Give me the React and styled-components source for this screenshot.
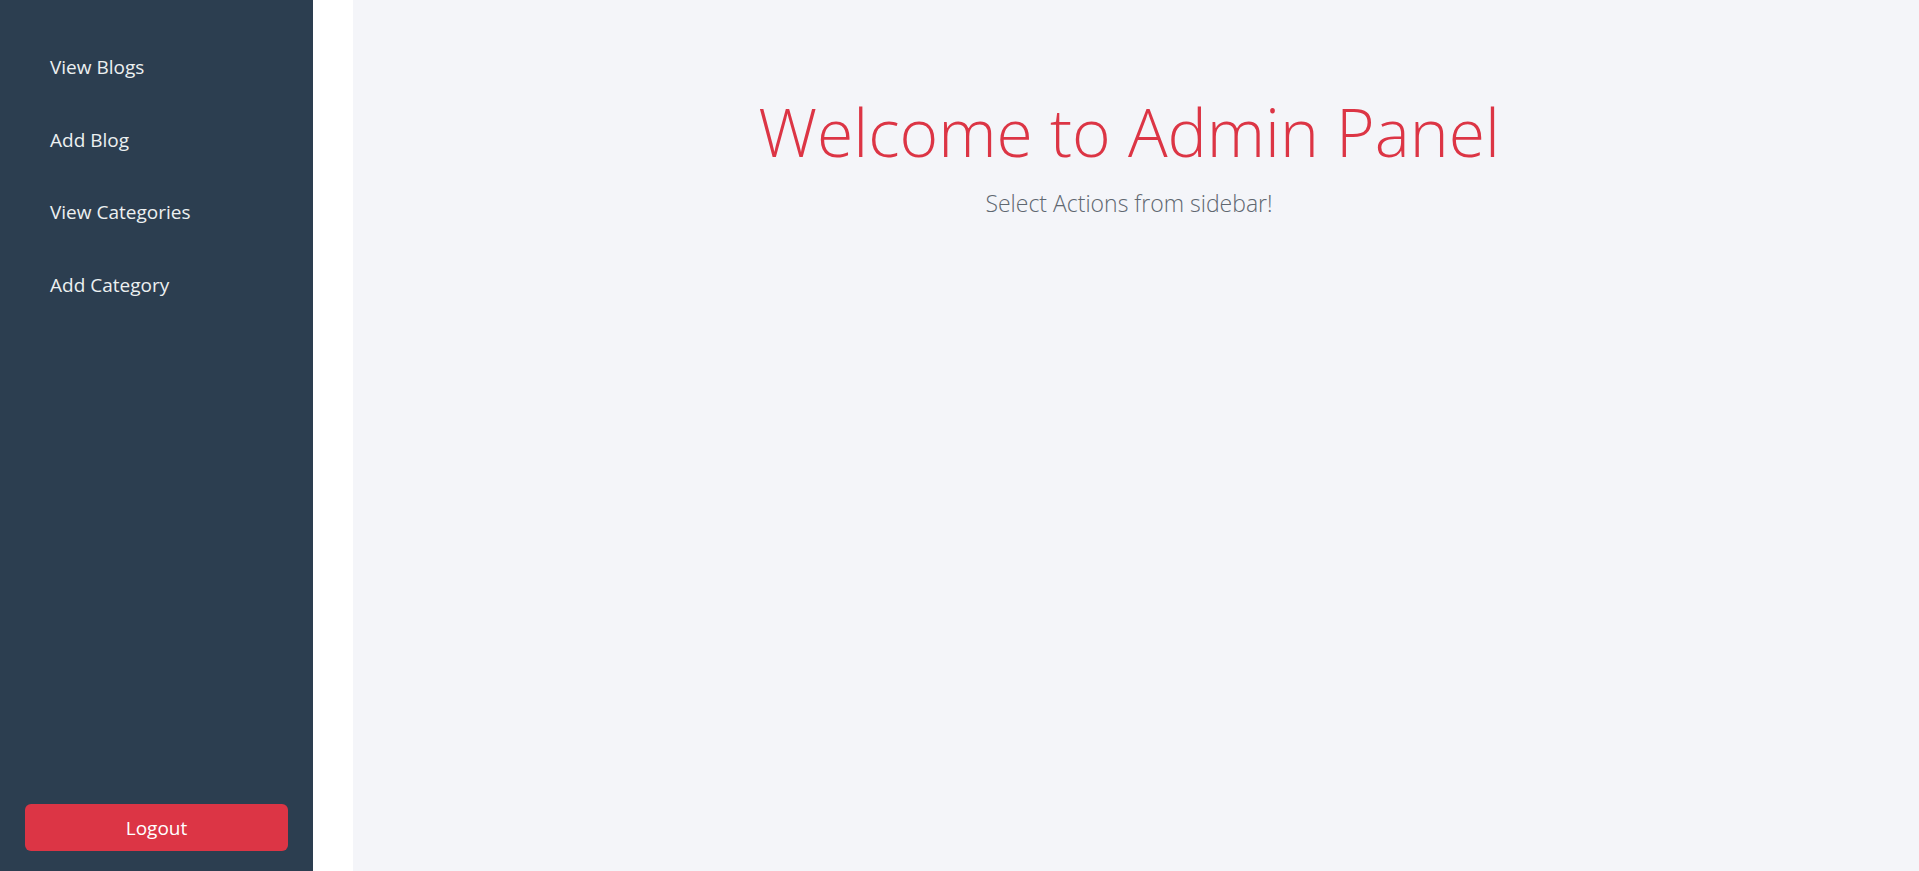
import styled, { createGlobalStyle } from "styled-components";

const GlobalStyle = createGlobalStyle`
    * {
        box-sizing: border-box;
    }
    body {
        margin: 0;
        font-family: 'Open Sans', 'Noto Sans', sans-serif;
        background: #FFFFFF;
    }
`

const links = ["View Blogs", "Add Blog", "View Categories", "Add Category"];

export default function App() {

    return (
        <>
            <GlobalStyle />
            <Layout>
                <Sidebar>
                    <Nav>
                        {links.map((label) => (
                            <NavLink key={label} href="#">{label}</NavLink>
                        ))}
                    </Nav>
                    <LogoutButton>Logout</LogoutButton>
                </Sidebar>
                <Main>
                    <Title>Welcome to Admin Panel</Title>
                    <Subtitle>Select Actions from sidebar!</Subtitle>
                </Main>
            </Layout>
        </>
    );
}

const Layout = styled.div`
    display: grid;
    grid-template-columns: 313px 1fr;
    column-gap: 40px;
    height: 871px;
    background: #FFFFFF;
`
const Sidebar = styled.aside`
    display: flex;
    flex-direction: column;
    justify-content: space-between;
    background: #2C3E50;
    padding: 31px 25px 20px 25px;
`
const Nav = styled.nav`
    display: flex;
    flex-direction: column;
`
const NavLink = styled.a`
    display: flex;
    align-items: center;
    height: 72.6px;
    padding-left: 25px;
    font-family: 'Open Sans', 'Noto Sans', sans-serif;
    font-size: 19px;
    color: #ECF0F1;
    text-decoration: none;
`
const LogoutButton = styled.button`
    width: 100%;
    height: 47px;
    border: none;
    border-radius: 6px;
    background: #DC3545;
    color: #FFFFFF;
    font-family: 'Open Sans', 'Noto Sans', sans-serif;
    font-size: 19px;
    cursor: pointer;
`
const Main = styled.main`
    display: flex;
    flex-direction: column;
    align-items: center;
    background: #F4F5F9;
    padding-top: 92px;
    padding-right: 14px;
`
const Title = styled.h1`
    margin: 0;
    font-family: 'Open Sans', 'Noto Sans', sans-serif;
    font-weight: 300;
    font-size: 66px;
    line-height: 1.2;
    color: #DC3545;
`
const Subtitle = styled.p`
    margin: 16px 0 0 0;
    font-family: 'Open Sans', 'Noto Sans', sans-serif;
    font-weight: 300;
    font-size: 23px;
    color: #5F6770;
`
